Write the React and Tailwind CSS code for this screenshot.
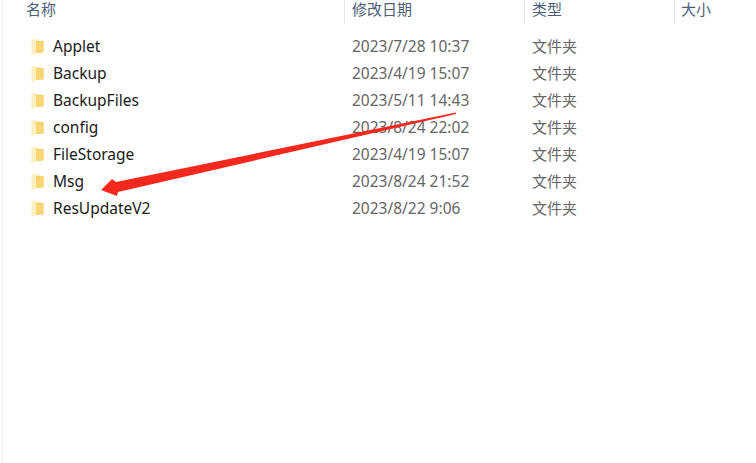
import React from "react";

const ROWS = [
  { name: "Applet", date: "2023/7/28 10:37" },
  { name: "Backup", date: "2023/4/19 15:07" },
  { name: "BackupFiles", date: "2023/5/11 14:43" },
  { name: "config", date: "2023/8/24 22:02" },
  { name: "FileStorage", date: "2023/4/19 15:07" },
  { name: "Msg", date: "2023/8/24 21:52" },
  { name: "ResUpdateV2", date: "2023/8/22 9:06" },
];

const FONT = "font-['Noto_Sans','Noto_Sans_CJK_SC',sans-serif]";

function Folder() {
  return (
    <svg width="13" height="18" viewBox="0 0 13 18" className="shrink-0">
      <path d="M0.5 2.5 L5 0.5 L5 2.5 L12.5 3 L12.5 14.5 L5 15 Z" fill="#f3cb62" />
      <path d="M5 3.5 L12.5 3.5 L12.5 14 L5 15 Z" fill="#f8d673" />
      <path d="M0.5 2.5 L5 0.5 L5 15 L0.5 17.5 Z" fill="#fdefc0" />
    </svg>
  );
}

export default function App() {
  return (
    <div className={`relative w-[756px] h-[463px] overflow-hidden bg-white ${FONT}`}>
      <div className="ml-[2px] h-full border-l border-[#f0f0f0]">
        <header className="flex h-[24px] text-[15px] leading-[19px] text-[#4c607a]">
          <div className="w-[341px] pl-[23px]">名称</div>
          <div className="w-[180px] pl-[7px] border-l border-[#e5e5e5]">修改日期</div>
          <div className="w-[150px] pl-[7px] border-l border-[#e5e5e5]">类型</div>
          <div className="flex-1 pl-[6px] border-l border-[#e5e5e5]">大小</div>
        </header>
        <ul className="pt-[9px]">
          {ROWS.map((r) => (
            <li key={r.name} className="flex items-center h-[27px]">
              <div className="flex items-center w-[342px] pl-[28px] gap-[9px] text-[15.5px] text-[#1a1a1a]">
                <Folder />
                <span>{r.name}</span>
              </div>
              <div className="w-[180px] pl-[7px] text-[15.5px] text-[#666666]">{r.date}</div>
              <div className="pl-[7px] text-[15px] text-[#666666]">文件夹</div>
            </li>
          ))}
        </ul>
      </div>
      <svg width="756" height="463" className="absolute inset-0 pointer-events-none">
        <path d="M456 112.5 L456 114 L118 192 L117 196 L101 190 L112 179 L116 182 Z" fill="#f5281e" />
      </svg>
    </div>
  );
}
